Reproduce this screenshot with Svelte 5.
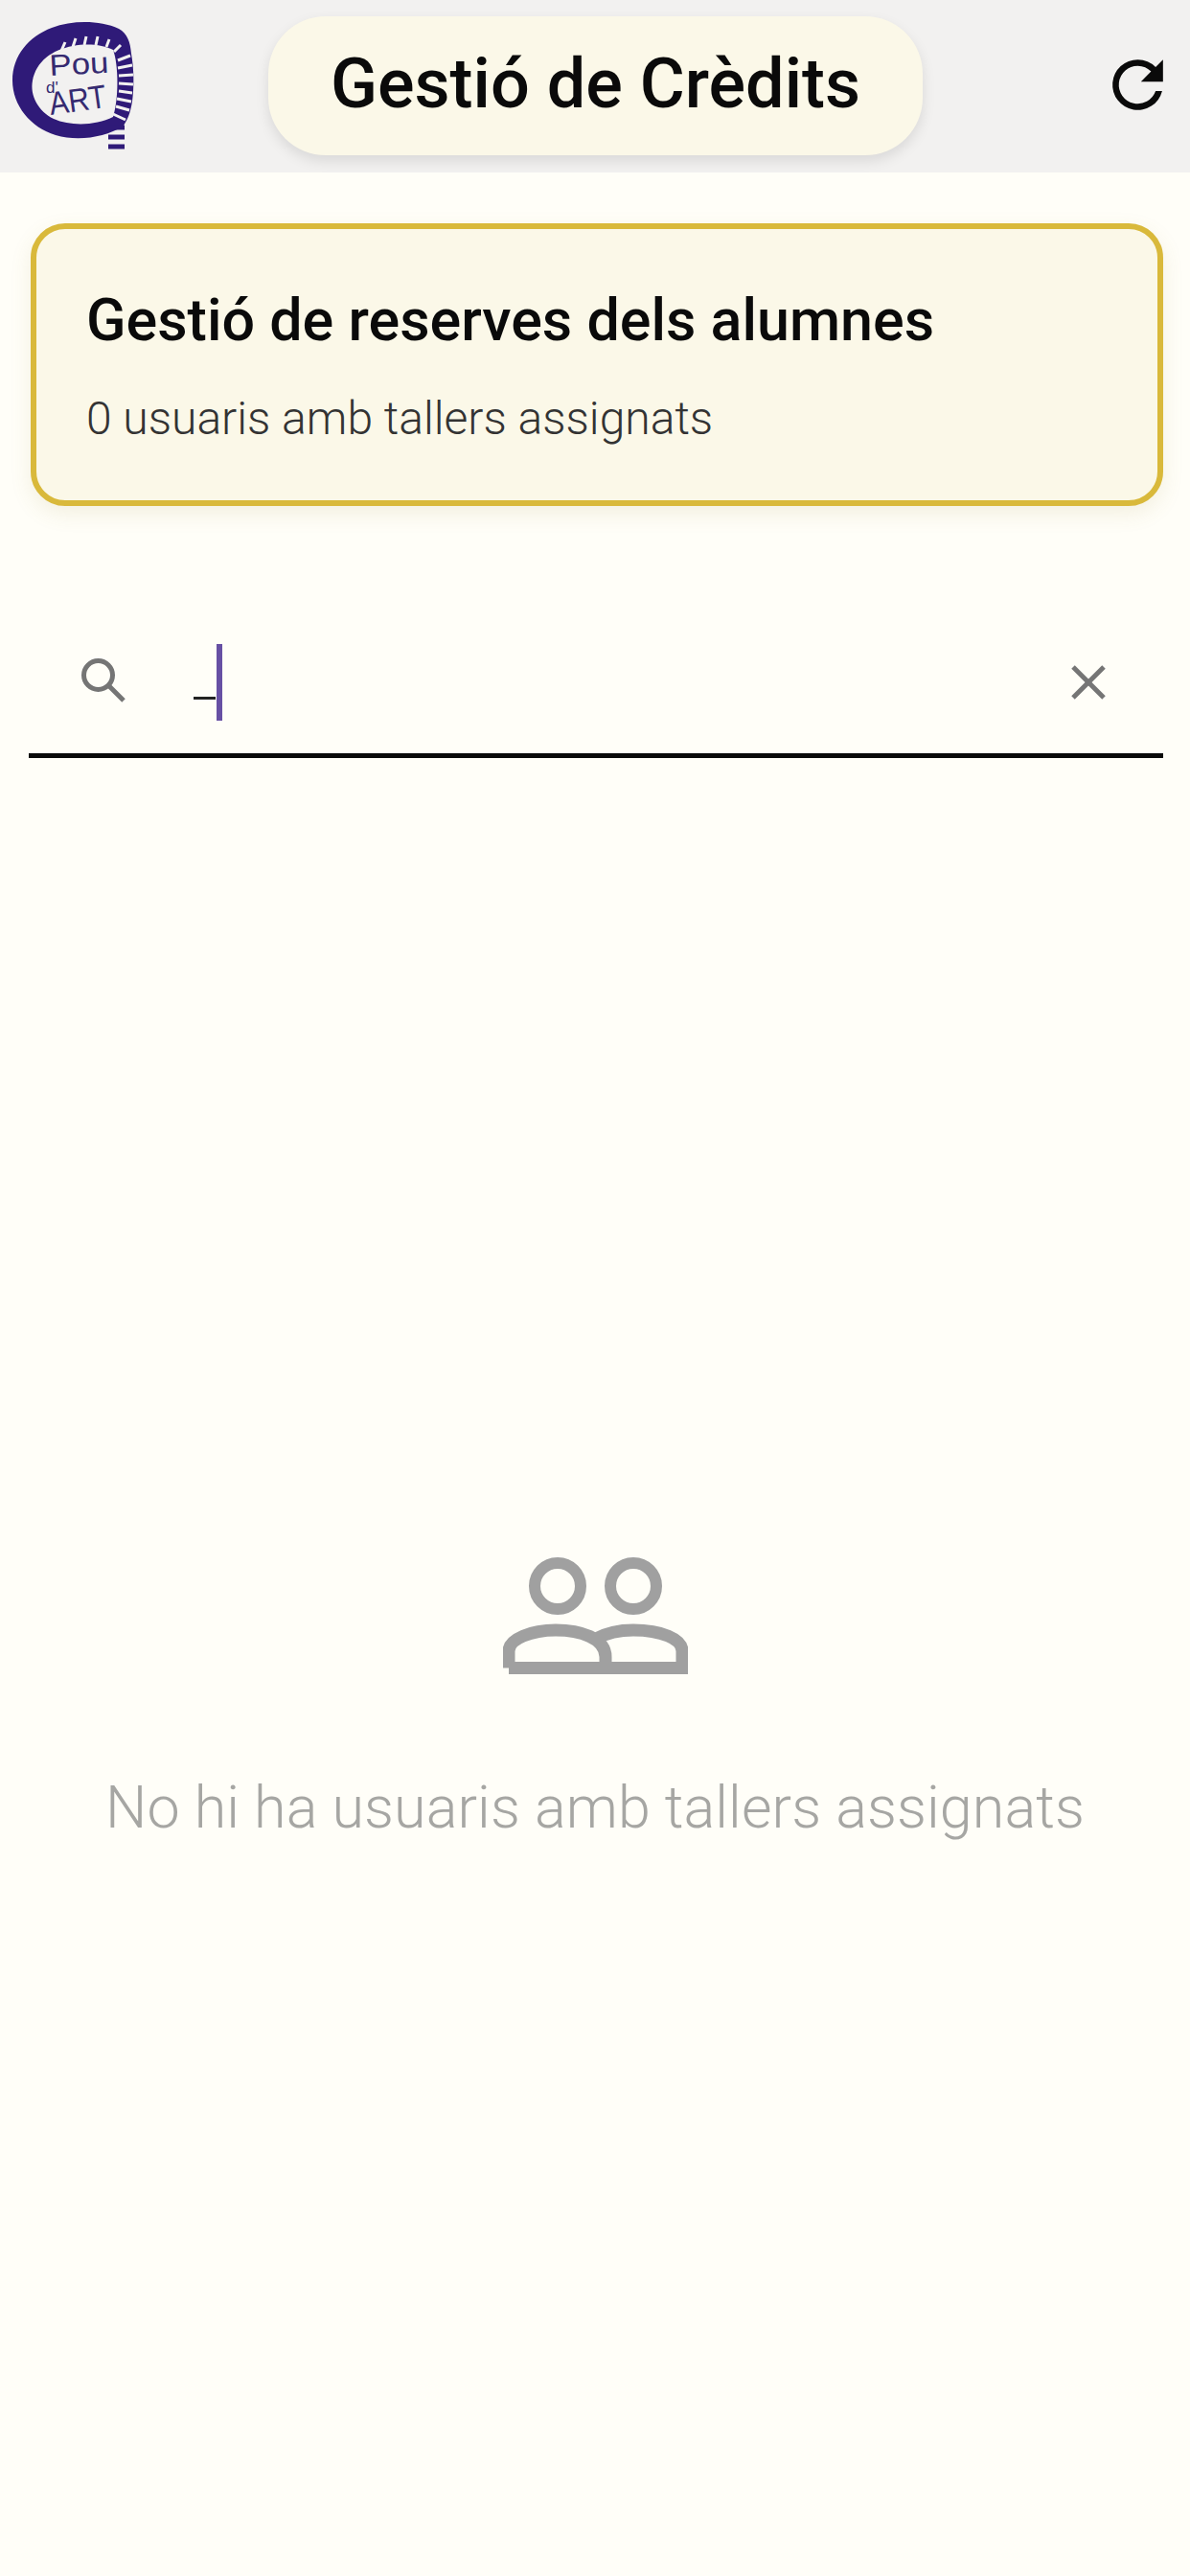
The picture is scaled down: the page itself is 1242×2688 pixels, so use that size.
<script>
  const slits = [[64,53,68,44],[76,49,79,40],[88,47,90,38],[100,47,102,38],[111,49,114,41],[119,54,126,47],[123,63,136,58],[123,71,138,68],[124,79,139,78],[124,87,139,88],[124,95,138,97],[122,103,137,106],[121,111,135,115],[118,119,131,125]];
</script>

<div class="page">
  <header class="top">
    <svg class="logo" viewBox="0 0 150 160" aria-label="Pou d'Art">
      <path class="ring" d="M128 132C110 143 82 148 58 141C32 133 13 110 13 84C13 58 30 38 54 29C76 21 104 21 124 30C133 35 136 44 137 56C140 72 140 92 138 106C136 118 133 126 128 132ZM118 52C108 47 92 45 76 48C54 52 38 64 34 84C31 100 40 116 56 124C74 132 100 131 118 122C124 104 124 68 118 52Z"/>
      {#each slits as s}
        <line class="slit" x1={s[0]} y1={s[1]} x2={s[2]} y2={s[3]}/>
      {/each}
      <line class="tooth" x1="113" y1="133" x2="130" y2="133"/>
      <line class="tooth" x1="113" y1="143" x2="130" y2="143"/>
      <line class="tooth" x1="113" y1="153" x2="130" y2="153"/>
      <text class="lg" x="52" y="79" font-size="31" textLength="62" lengthAdjust="spacingAndGlyphs" transform="rotate(-3 52 79)">Pou</text>
      <text class="lg" x="48" y="97" font-size="17">d'</text>
      <text class="lg" x="53" y="120" font-size="34" textLength="60" lengthAdjust="spacingAndGlyphs" transform="rotate(-8 53 120)">ART</text>
    </svg>
    <div class="pill"><h1>Gestió de Crèdits</h1></div>
    <svg class="refresh" viewBox="0 0 24 24" aria-label="Actualitza">
      <path d="M17.65 6.35A7.96 7.96 0 0 0 12 4a8 8 0 1 0 7.73 10h-2.08A6 6 0 1 1 12 6c1.66 0 3.14.69 4.22 1.78L13 11h7V4l-2.35 2.35z"/>
    </svg>
  </header>

  <section class="card">
    <h2>Gestió de reserves dels alumnes</h2>
    <p>0 usuaris amb tallers assignats</p>
  </section>

  <div class="search">
    <svg class="sicon" viewBox="0 0 46 46" aria-hidden="true">
      <circle cx="17.5" cy="17.5" r="15"/>
      <line x1="29" y1="29" x2="44" y2="44"/>
    </svg>
    <div class="field">
      <span class="dash"></span>
      <span class="caret"></span>
    </div>
    <svg class="clear" viewBox="0 0 36 36" aria-hidden="true">
      <line x1="2" y1="2" x2="34" y2="34"/>
      <line x1="34" y1="2" x2="2" y2="34"/>
    </svg>
  </div>

  <main class="empty">
    <svg class="people" viewBox="0 0 193 122" aria-hidden="true">
      <circle cx="57" cy="30" r="24"/>
      <circle cx="136" cy="30" r="24"/>
      <path d="M6 115.5V98C6 85 30 76 55 76C80 76 107 84 107 104V115.5M6 115.5H187V98C187 85 165 76 136 76C122 76 108 79 97 85"/>
    </svg>
    <p>No hi ha usuaris amb tallers assignats</p>
  </main>
</div>

<style>
  :global(body) { margin: 0; background: #fffef8; }
  .page {
    width: 1242px;
    height: 2688px;
    background: #fffef8;
    font-family: Roboto, "Liberation Sans", sans-serif;
    display: flex;
    flex-direction: column;
    overflow: hidden;
  }
  .top {
    height: 180px;
    flex: none;
    background: #f2f1f0;
    display: flex;
    align-items: flex-start;
    box-sizing: border-box;
    padding-top: 17px;
  }
  .logo { width: 150px; height: 160px; flex: none; margin-top: -17px; }
  .ring { fill: #2f1a78; fill-rule: evenodd; }
  .slit { stroke: #f2f1f0; stroke-width: 3; }
  .tooth { stroke: #2f1a78; stroke-width: 5; }
  .lg { fill: #352a70; font-family: "Liberation Sans", sans-serif; }
  .pill {
    width: 683px;
    height: 145px;
    margin-left: 130px;
    flex: none;
    background: #fbf8e8;
    border-radius: 60px;
    box-shadow: 0 6px 14px rgba(0, 0, 0, 0.1);
    display: flex;
    align-items: center;
    justify-content: center;
    box-sizing: border-box;
    padding-bottom: 4px;
  }
  h1 {
    margin: 0;
    font-size: 72px;
    font-weight: 500;
    color: #0a0a0a;
    line-height: 1;
  }
  .refresh { width: 79px; height: 79px; fill: #0a0a0a; flex: none; margin: 32px 0 0 185px; }
  .card {
    margin: 53px 28px 0 32px;
    height: 295px;
    box-sizing: border-box;
    flex: none;
    border: 6px solid #d9b93b;
    border-radius: 36px;
    background: #fbf8e8;
    box-shadow: 0 8px 22px rgba(160, 140, 60, 0.12);
    padding: 60px 0 0 52px;
  }
  h2 {
    margin: 0;
    font-size: 61px;
    font-weight: 500;
    line-height: 70px;
    color: #0a0a0a;
  }
  .card p {
    margin: 40px 0 0;
    font-size: 48px;
    font-weight: 300;
    line-height: 56px;
    color: #333;
  }
  .search {
    margin: 0 28px 0 30px;
    height: 263px;
    flex: none;
    box-sizing: border-box;
    border-bottom: 5px solid #0a0a0a;
    display: flex;
    align-items: flex-end;
    padding-bottom: 34px;
  }
  .sicon { width: 46px; height: 46px; fill: none; stroke: #757575; stroke-width: 5; margin: 0 0 19px 55px; flex: none; }
  .field { flex: 1; display: flex; align-items: flex-end; margin-left: 71px; height: 80px; }
  .dash { width: 23px; height: 3px; background: #222; margin-bottom: 22px; }
  .caret { width: 6px; height: 80px; background: #6750a4; margin-left: 1px; }
  .clear { width: 36px; height: 36px; stroke: #757575; stroke-width: 5; margin: 0 60px 22px 0; flex: none; }
  .empty {
    flex: 1;
    display: flex;
    flex-direction: column;
    align-items: center;
    padding-top: 834px;
  }
  .people { width: 193px; height: 122px; fill: none; stroke: #a0a0a0; stroke-width: 12; }
  .people path { stroke-width: 13; }
  .empty p {
    margin: 103px 0 0;
    font-size: 61px;
    font-weight: 300;
    line-height: 72px;
    color: #a6a6a3;
    letter-spacing: 0.1px;
  }
</style>
